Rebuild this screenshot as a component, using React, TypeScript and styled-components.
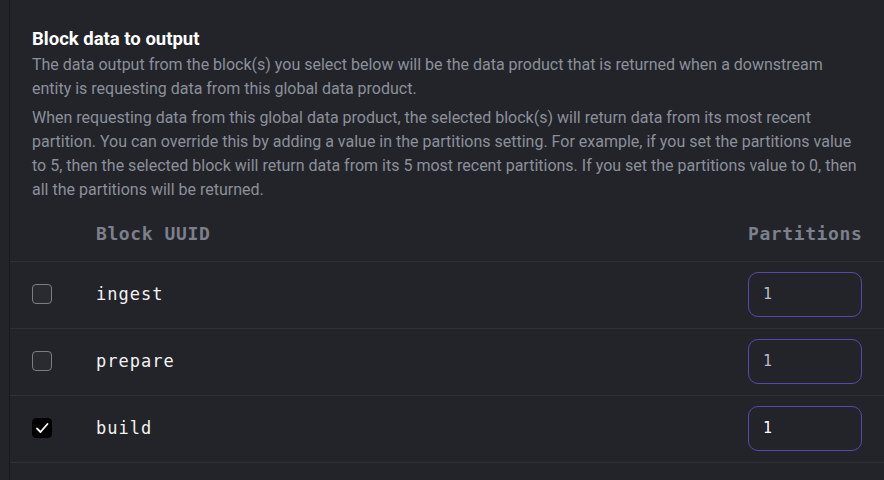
import React, { useState } from "react";
import styled, { createGlobalStyle } from "styled-components";

const Global = createGlobalStyle`
  html, body { margin: 0; padding: 0; background: #232429; }
  body { font-family: Roboto, "Liberation Sans", sans-serif; }
`;

const Page = styled.div`
  height: 480px;
  background: #232429;
  padding-left: 9px;
  overflow: hidden;
`;

const Panel = styled.div`
  border-left: 1px solid #18191c;
  height: 100%;
  padding-top: 26px;
  box-sizing: border-box;
`;

const Intro = styled.div`
  padding: 0 22px 0 22px;
`;

const Title = styled.h2`
  margin: 0;
  font-size: 18.5px;
  line-height: 27px;
  font-weight: 700;
  color: #ffffff;
`;

const Para = styled.p`
  margin: 0 0 5px;
  font-size: 16px;
  line-height: 24px;
  color: #8b909b;
`;

const Table = styled.div`
  margin-top: 1px;
`;

const Row = styled.div<{ $header?: boolean }>`
  display: grid;
  grid-template-columns: 64px 1fr 114px;
  align-items: center;
  height: ${(p) => (p.$header ? "54px" : "66px")};
  box-sizing: content-box;
  padding: 0 22px 0 22px;
  border-bottom: 1px solid #2e3036;
`;

const Cell = styled.div`
  display: flex;
  align-items: center;
  margin-top: -2px;
`;

const HeadCell = styled.div<{ $right?: boolean }>`
  font-family: "DejaVu Sans Mono", "Liberation Mono", monospace;
  font-size: 18px;
  font-weight: 700;
  letter-spacing: 0.6px;
  color: #7b808c;
  margin-top: -2px;
  text-align: ${(p) => (p.$right ? "right" : "left")};
  white-space: nowrap;
`;

const Name = styled.div`
  font-family: "DejaVu Sans Mono", "Liberation Mono", monospace;
  font-size: 17px;
  letter-spacing: 1px;
  color: #f2f2f2;
  margin-top: -3px;
`;

const Box = styled.button<{ $checked: boolean }>`
  width: 20px;
  height: 20px;
  padding: 0;
  border-radius: 4px;
  border: 1px solid ${(p) => (p.$checked ? "#000" : "#7a7d85")};
  background: ${(p) => (p.$checked ? "#000" : "#2a2b30")};
  display: flex;
  align-items: center;
  justify-content: center;
  cursor: pointer;
`;

const Input = styled.input<{ $active: boolean }>`
  width: 114px;
  height: 45px;
  box-sizing: border-box;
  border: 1px solid #5e44b0;
  border-radius: 10px;
  background: transparent;
  padding: 0 14px;
  font-family: "DejaVu Sans Mono", "Liberation Mono", monospace;
  font-size: 15px;
  color: ${(p) => (p.$active ? "#ffffff" : "#b8bcc6")};
  outline: none;
`;

const blocks = [
  { uuid: "ingest", checked: false },
  { uuid: "prepare", checked: false },
  { uuid: "build", checked: true },
];

export default function App() {
  const [rows, setRows] = useState(blocks);
  return (
    <Page>
      <Global />
      <Panel>
        <Intro>
          <Title>Block data to output</Title>
          <Para>
            The data output from the block(s) you select below will be the data product that is
            returned when a downstream entity is requesting data from this global data product.
          </Para>
          <Para>
            When requesting data from this global data product, the selected block(s) will return
            data from its most recent partition. You can override this by adding a value in the
            partitions setting. For example, if you set the partitions value to 5, then the selected
            block will return data from its 5 most recent partitions. If you set the partitions value
            to 0, then all the partitions will be returned.
          </Para>
        </Intro>
        <Table>
          <Row $header>
            <div />
            <HeadCell>Block UUID</HeadCell>
            <HeadCell $right>Partitions</HeadCell>
          </Row>
          {rows.map((r, i) => (
            <Row key={r.uuid}>
              <Cell>
                <Box
                  $checked={r.checked}
                  onClick={() =>
                    setRows(rows.map((x, j) => (j === i ? { ...x, checked: !x.checked } : x)))
                  }
                >
                  {r.checked && (
                    <svg width="14" height="14" viewBox="0 0 14 14" fill="none">
                      <path d="M2 7.5 L5.5 11 L12.5 3" stroke="#fff" strokeWidth="1.8" strokeLinecap="round" strokeLinejoin="round" />
                    </svg>
                  )}
                </Box>
              </Cell>
              <Name>{r.uuid}</Name>
              <Cell>
                <Input $active={r.checked} defaultValue="1" />
              </Cell>
            </Row>
          ))}
        </Table>
      </Panel>
    </Page>
  );
}
